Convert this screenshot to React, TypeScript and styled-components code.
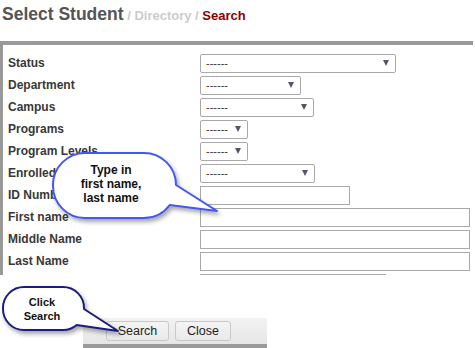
import React from 'react';
import styled, { createGlobalStyle } from 'styled-components';

const GlobalStyle = createGlobalStyle`
  html, body {
    margin: 0;
    padding: 0;
    background: #ffffff;
  }
  body {
    font-family: "Liberation Sans", Arial, sans-serif;
    width: 475px;
    height: 348px;
    overflow: hidden;
  }
`;

const Page = styled.div`
  position: relative;
  width: 475px;
  height: 348px;
`;

const Header = styled.div`
  height: 41px;
  box-sizing: border-box;
  padding: 4px 0 0 2px;
  display: flex;
  align-items: baseline;
  white-space: pre;
`;

const Title = styled.span`
  font-size: 17.5px;
  font-weight: bold;
  color: #555555;
`;

const Crumb = styled.span<{ $current?: boolean }>`
  font-size: 13px;
  font-weight: bold;
  color: ${(p) => (p.$current ? '#8b0000' : '#cccccc')};
`;

const Panel = styled.div`
  box-sizing: border-box;
  height: 234px;
  margin-right: 2px;
  border-top: 4px solid #999999;
  border-left: 3px solid #999999;
  padding: 7px 0 0 5px;
  overflow: hidden;
`;

const Row = styled.div`
  display: grid;
  grid-template-columns: 192px 1fr;
  align-items: center;
  height: 22px;
`;

const Label = styled.span`
  font-size: 12px;
  font-weight: bold;
  color: #383838;
`;

const Select = styled.div<{ $w: number }>`
  box-sizing: border-box;
  width: ${(p) => p.$w}px;
  height: 19px;
  border: 1px solid #a9a9a9;
  border-radius: 2px;
  display: flex;
  align-items: center;
  justify-content: space-between;
  padding: 0 6px 0 5px;
  font-size: 11px;
  color: #333333;
`;

const Arrow = styled.span`
  width: 0;
  height: 0;
  border-left: 3.5px solid transparent;
  border-right: 3.5px solid transparent;
  border-top: 6px solid #55566a;
`;

const Input = styled.div<{ $w: number }>`
  box-sizing: border-box;
  width: ${(p) => p.$w}px;
  height: 19px;
  border: 1px solid #a9a9a9;
`;

const ButtonBar = styled.div`
  box-sizing: border-box;
  margin: 43px 0 0 83px;
  width: 184px;
  height: 30px;
  padding: 3px 0 0 23px;
  display: flex;
  gap: 6px;
  background: linear-gradient(#f2f2f2, #e6e6e6);
  border-bottom: 4px solid #9a9a9a;
`;

const Button = styled.div<{ $w: number }>`
  box-sizing: border-box;
  width: ${(p) => p.$w}px;
  height: 20px;
  border: 1px solid #c9c9c9;
  border-radius: 3px;
  background: linear-gradient(#f4f4f4, #e9e9e9);
  display: flex;
  align-items: center;
  justify-content: center;
  font-size: 12.5px;
  color: #222222;
`;

const Callout = styled.div<{ $x: number; $y: number; $w: number; $h: number }>`
  position: absolute;
  left: ${(p) => p.$x}px;
  top: ${(p) => p.$y}px;
  width: ${(p) => p.$w}px;
  height: ${(p) => p.$h}px;
  svg {
    position: absolute;
    left: 0;
    top: 0;
    overflow: visible;
  }
`;

const CalloutText = styled.div<{ $x: number; $y: number; $w: number; $size: number }>`
  position: absolute;
  left: ${(p) => p.$x}px;
  top: ${(p) => p.$y}px;
  width: ${(p) => p.$w}px;
  text-align: center;
  font-size: ${(p) => p.$size}px;
  line-height: 14px;
  font-weight: bold;
  color: #111111;
`;

type Field =
  | { label: string; kind: 'select'; w: number }
  | { label: string; kind: 'input'; w: number };

const fields: Field[] = [
  { label: 'Status', kind: 'select', w: 196 },
  { label: 'Department', kind: 'select', w: 101 },
  { label: 'Campus', kind: 'select', w: 114 },
  { label: 'Programs', kind: 'select', w: 48 },
  { label: 'Program Levels', kind: 'select', w: 48 },
  { label: 'Enrolled', kind: 'select', w: 115 },
  { label: 'ID Number', kind: 'input', w: 150 },
  { label: 'First name', kind: 'input', w: 270 },
  { label: 'Middle Name', kind: 'input', w: 270 },
  { label: 'Last Name', kind: 'input', w: 270 },
  { label: '', kind: 'input', w: 186 },
];

const App: React.FC = () => (
  <>
    <GlobalStyle />
    <Page>
      <Header>
        <Title>Select Student</Title>
        <Crumb> / Directory / </Crumb>
        <Crumb $current>Search</Crumb>
      </Header>

      <Panel>
        {fields.map((f, i) => (
          <Row key={i}>
            <Label>{f.label}</Label>
            {f.kind === 'select' ? (
              <Select $w={f.w}>
                <span>------</span>
                <Arrow />
              </Select>
            ) : (
              <Input $w={f.w} />
            )}
          </Row>
        ))}
      </Panel>

      <ButtonBar>
        <Button $w={63}>Search</Button>
        <Button $w={56}>Close</Button>
      </ButtonBar>

      <Callout $x={48} $y={148} $w={175} $h={75}>
        <svg width="175" height="75">
          <defs>
            <filter id="sh1" x="-20%" y="-20%" width="140%" height="150%">
              <feDropShadow dx="2" dy="3" stdDeviation="2" floodColor="#000" floodOpacity="0.35" />
            </filter>
          </defs>
          <path
            d="M37,5 H96 A32,32 0 0 1 128,37 L169,63 L121.7,57 A32,32 0 0 1 96,70 H37 A32,32 0 0 1 5,38 V37 A32,32 0 0 1 37,5 Z"
            fill="#ffffff"
            stroke="#4557f2"
            strokeWidth="2"
            strokeLinejoin="round"
            filter="url(#sh1)"
          />
        </svg>
        <CalloutText $x={13} $y={15} $w={100} $size={12}>
          Type in
          <br />
          first name,
          <br />
          last name
        </CalloutText>
      </Callout>

      <Callout $x={0} $y={282} $w={125} $h={55}>
        <svg width="125" height="55">
          <defs>
            <filter id="sh2" x="-20%" y="-20%" width="140%" height="160%">
              <feDropShadow dx="2" dy="3" stdDeviation="2" floodColor="#000" floodOpacity="0.35" />
            </filter>
          </defs>
          <path
            d="M24,5 H63 A21,21 0 0 1 84,26 V27 L118,49 L76.7,43 A21,21 0 0 1 63,48 H24 A21,21 0 0 1 3,27 V26 A21,21 0 0 1 24,5 Z"
            fill="#ffffff"
            stroke="#1c1f80"
            strokeWidth="2"
            strokeLinejoin="round"
            filter="url(#sh2)"
          />
        </svg>
        <CalloutText $x={7} $y={13} $w={70} $size={11}>
          Click
          <br />
          Search
        </CalloutText>
      </Callout>
    </Page>
  </>
);

export default App;
